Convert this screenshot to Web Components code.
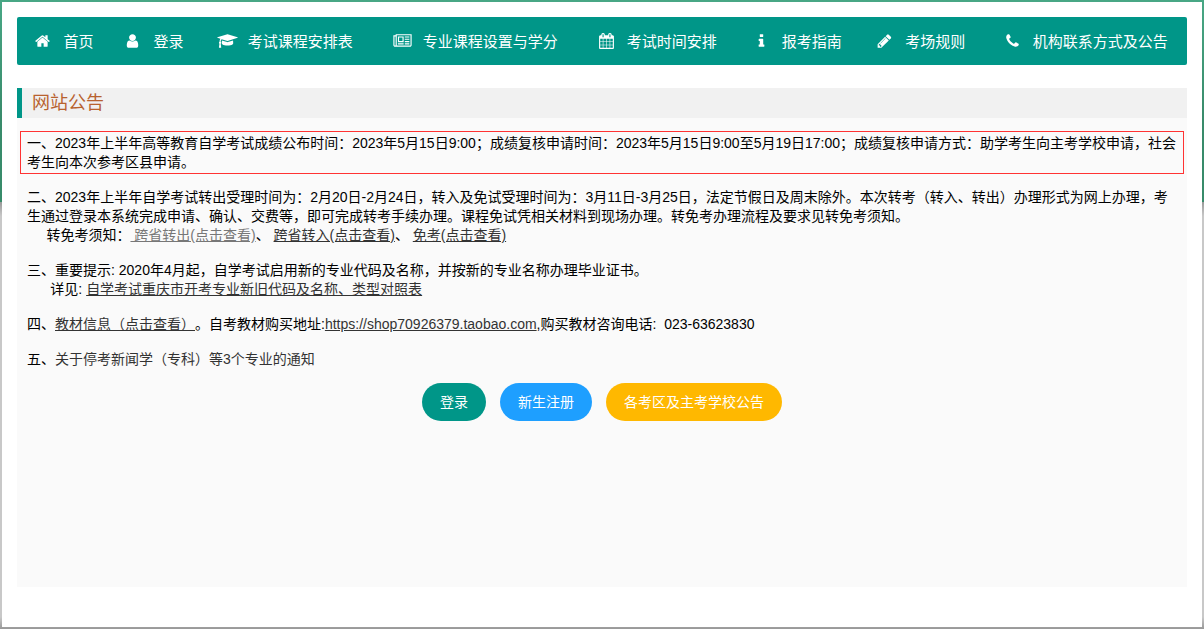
<!DOCTYPE html>
<html lang="zh-CN">
<head>
<meta charset="utf-8">
<title>网站公告</title>
<style>
html { background: #b8b8b8; }
body {
  margin: 0;
  font-family: "Liberation Sans", "Noto Sans CJK SC", sans-serif;
  font-size: 14px;
  line-height: 19px;
  color: #000;
  text-spacing-trim: space-all;
}
</style>
</head>
<body>
<exam-page>
  <nav-bar slot="nav"></nav-bar>
  <section-title slot="title">网站公告</section-title>
  <notice-item boxed>一、2023年上半年高等教育自学考试成绩公布时间：2023年5月15日9:00；成绩复核申请时间：2023年5月15日9:00至5月19日17:00；成绩复核申请方式：助学考生向主考学校申请，社会考生向本次参考区县申请。</notice-item>
  <notice-item>二、2023年上半年自学考试转出受理时间为：2月20日-2月24日，转入及免试受理时间为：3月11日-3月25日，法定节假日及周末除外。本次转考（转入、转出）办理形式为网上办理，考生通过登录本系统完成申请、确认、交费等，即可完成转考手续办理。课程免试凭相关材料到现场办理。转免考办理流程及要求见转免考须知。<br>&nbsp;&nbsp;&nbsp;&nbsp;&nbsp;转免考须知：<text-link muted>&nbsp;跨省转出(点击查看)</text-link>、 <text-link>跨省转入(点击查看)</text-link>、 <text-link>免考(点击查看)</text-link></notice-item>
  <notice-item>三、重要提示: 2020年4月起，自学考试启用新的专业代码及名称，并按新的专业名称办理毕业证书。<br>&nbsp;&nbsp;&nbsp;&nbsp;&nbsp;&nbsp;详见: <text-link>自学考试重庆市开考专业新旧代码及名称、类型对照表</text-link></notice-item>
  <notice-item>四、<text-link>教材信息（点击查看）</text-link>。自考教材购买地址:<text-link>https://shop70926379.taobao.com</text-link>,购买教材咨询电话:&nbsp; 023-63623830</notice-item>
  <notice-item>五、<text-link plain>关于停考新闻学（专科）等3个专业的通知</text-link></notice-item>
  <round-button slot="actions">登录</round-button>
  <round-button slot="actions" tone="blue">新生注册</round-button>
  <round-button slot="actions" tone="amber">各考区及主考学校公告</round-button>
</exam-page>

<script>
function define(name, html, setup) {
  const template = document.createElement('template');
  template.innerHTML = html;
  customElements.define(name, class extends HTMLElement {
    constructor() {
      super();
      this.attachShadow({ mode: 'open' }).append(template.content.cloneNode(true));
      if (setup) setup(this.shadowRoot);
    }
  });
}

define('exam-page', `
<style>
:host {
  display: flex;
  box-sizing: border-box;
  min-height: 100vh;
  padding: 2px;
  background: linear-gradient(#48a785 0, #398b6b 120px, #378b6a 202px, #999 202px, #c8c8c8 216px, #c8c8c8 calc(100% - 12px), #989898 100%);
}
.sheet {
  flex: 1;
  display: flex;
  flex-direction: column;
  min-width: 0;
  background: #fff;
  padding: 15px 15px 40px;
}
main { flex: 1; display: flex; flex-direction: column; margin-top: 23px; background: #fafafa; }
.notices { display: flex; flex-direction: column; gap: 13px; padding: 13px 3px 11px; }
.actions { display: flex; flex-wrap: wrap; justify-content: center; gap: 14px; }
</style>
<div class="sheet">
  <slot name="nav"></slot>
  <main>
    <slot name="title"></slot>
    <div class="notices"><slot></slot></div>
    <div class="actions"><slot name="actions"></slot></div>
  </main>
</div>`);

const navItems = [
  ['首页', 1792, 'M1472 992v480q0 26-19 45t-45 19h-384v-384h-256v384h-384q-26 0-45-19t-19-45v-480q0-1 .5-3t.5-3l575-474 575 474q1 2 1 6zm223-69l-62 74q-8 9-21 11h-3q-13 0-21-7l-692-577-692 577q-12 8-24 7-13-2-21-11l-62-74q-8-10-7-23.5t11-21.5l719-599q32-26 76-26t76 26l244 204v-195q0-14 9-23t23-9h192q14 0 23 9t9 23v408l219 182q10 8 11 21.5t-7 23.5z'],
  ['登录', 1792, 'M1536 1399q0 109-62.5 187t-150.5 78h-854q-88 0-150.5-78t-62.5-187q0-85 8.5-160.5t31.5-152 58.5-131 94-89 134.5-34.5q131 128 313 128t313-128q76 0 134.5 34.5t94 89 58.5 131 31.5 152 8.5 160.5zm-256-887q0 159-112.5 271.5t-271.5 112.5-271.5-112.5-112.5-271.5 112.5-271.5 271.5-112.5 271.5 112.5 112.5 271.5z'],
  ['考试课程安排表', 2304, 'M1774 836l18 316q4 69-82 128t-235 93.5-323 34.5-323-34.5-235-93.5-82-128l18-316 574 181q22 7 48 7t48-7zM2304 512q0 23-22 31l-1120 352q-4 1-10 1t-10-1l-652-206q-43 34-71 111.5t-34 178.5q63 36 63 109 0 69-58 107l58 433q2 14-8 25-9 11-24 11h-192q-15 0-24-11-10-11-8-25l58-433q-58-38-58-107 0-73 65-111 11-207 98-330l-333-104q-22-8-22-31t22-31l1120-352q4-1 10-1t10 1l1120 352q22 8 22 31z'],
  ['专业课程设置与学分', 2048, 'M1024 512h-384v384h384zM1152 1152v128h-640v-128zM1152 384v640h-640v-640zM1792 1152v128h-512v-128zM1792 896v128h-512v-128zM1792 640v128h-512v-128zM1792 384v128h-512v-128zM256 1344v-960h-128v960q0 26 19 45t45 19 45-19 19-45zM1920 1344v-1088h-1536v1088q0 33-11 64h1483q26 0 45-19t19-45zM2048 128v1216q0 80-56 136t-136 56h-1664q-80 0-136-56t-56-136v-1088h256v-128z'],
  ['考试时间安排', 1792, 'M192 1664h288v-288h-288v288zm352 0h320v-288h-320v288zm-352-352h288v-320h-288v320zm352 0h320v-320h-320v320zm-352-384h288v-288h-288v288zm736 736h320v-288h-320v288zm-384-736h320v-288h-320v288zm768 736h288v-288h-288v288zm-384-352h320v-320h-320v320zm-352-864v-288q0-13-9.5-22.5t-22.5-9.5h-64q-13 0-22.5 9.5t-9.5 22.5v288q0 13 9.5 22.5t22.5 9.5h64q13 0 22.5-9.5t9.5-22.5zm736 864h288v-320h-288v320zm-384-384h320v-288h-320v288zm384 0h288v-288h-288v288zm32-480v-288q0-13-9.5-22.5t-22.5-9.5h-64q-13 0-22.5 9.5t-9.5 22.5v288q0 13 9.5 22.5t22.5 9.5h64q13 0 22.5-9.5t9.5-22.5zm384-64v1280q0 52-38 90t-90 38h-1408q-52 0-90-38t-38-90v-1280q0-52 38-90t90-38h128v-96q0-66 47-113t113-47h64q66 0 113 47t47 113v96h384v-96q0-66 47-113t113-47h64q66 0 113 47t47 113v96h128q52 0 90 38t38 90z'],
  ['报考指南', 1792, 'M1216 1344v128q0 26-19 45t-45 19h-512q-26 0-45-19t-19-45v-128q0-26 19-45t45-19h64v-384h-64q-26 0-45-19t-19-45v-128q0-26 19-45t45-19h384q26 0 45 19t19 45v576h64q26 0 45 19t19 45zm-128-1152v192q0 26-19 45t-45 19h-256q-26 0-45-19t-19-45v-192q0-26 19-45t45-19h256q26 0 45 19t19 45z'],
  ['考场规则', 1792, 'M491 1536l91-91-235-235-91 91v107h128v128h107zm523-928q0-22-22-22-10 0-17 7l-542 542q-7 7-7 17 0 22 22 22 10 0 17-7l542-542q7-7 7-17zm-54-192l416 416-832 832h-416v-416zm683 96q0 53-37 90l-166 166-416-416 166-165q36-38 90-38 53 0 91 38l235 234q37 39 37 91z'],
  ['机构联系方式及公告', 1792, 'M1600 1240q0 27-10 70.5t-21 68.5q-21 50-122 106-94 51-186 51-27 0-53-3.5t-57.5-12.5-47-14.5-55.5-20.5-49-18q-98-35-175-83-127-79-264-216t-216-264q-48-77-83-175-3-9-18-49t-20.5-55.5-14.5-47-12.5-57.5-3.5-53q0-92 51-186 56-101 106-122 25-11 68.5-21t70.5-10q14 0 21 3 18 6 53 76 11 19 30 54t35 63.5 31 53.5q3 4 17.5 25t21.5 35.5 7 28.5q0 20-28.5 50t-62 55-62 53-28.5 46q0 9 5 22.5t8.5 20.5 14 24 11.5 19q76 137 174 235t235 174q2 1 19 11.5t24 14 20.5 8.5 22.5 5q18 0 46-28.5t53-62 55-62 50-28.5q14 0 28.5 7t35.5 21.5 25 17.5q25 15 53.5 31t63.5 35 54 30q70 35 76 53 3 7 3 21z']
];

define('nav-bar', `
<style>
:host { display: block; background: #009688; border-radius: 2px; }
ul { display: table; width: 100%; margin: 0; padding: 0; list-style: none; }
li { display: table-cell; padding: 0 9px 0 11px; text-align: center; white-space: nowrap; }
a {
  display: inline-flex;
  align-items: center;
  gap: 10px;
  height: 48px;
  vertical-align: top;
  color: #fff;
  font-size: 15px;
  text-decoration: none;
}
svg { flex: none; width: 21px; height: 16px; fill: currentColor; fill-rule: evenodd; }
</style>
<nav><ul></ul></nav>`, root => {
  root.querySelector('ul').innerHTML = navItems.map(([label, width, path]) =>
    `<li><a href="#"><svg viewBox="0 0 ${width} 1792" aria-hidden="true"><path d="${path}"/></svg><span>${label}</span></a></li>`).join('');
});

define('section-title', `
<style>
:host { display: block; background: #f1f1f1; border-left: 5px solid #009688; }
h1 { margin: 0; padding: 0 10px; font-size: 18px; line-height: 30px; font-weight: 400; color: #b8622f; }
</style>
<h1><slot></slot></h1>`);

define('notice-item', `
<style>
:host { display: block; padding: 0 7px 3px; }
:host([boxed]) { border: 1px solid #f33; padding: 2px 6px 1px; margin-bottom: 1px; }
p { margin: 0; }
</style>
<p><slot></slot></p>`);

// Inline element: no whitespace may stand before the anchor.
define('text-link', `<style>
:host { display: inline; }
a { color: #333; text-decoration: underline; }
:host([muted]) a { color: #777; }
:host([plain]) a { text-decoration: none; }
</style><a href="#"><slot></slot></a>`);

define('round-button', `
<style>
:host { display: block; }
button {
  display: block;
  height: 38px;
  padding: 0 18px;
  border: 0;
  border-radius: 100px;
  background: #009688;
  color: #fff;
  font: inherit;
  white-space: nowrap;
  cursor: pointer;
}
:host([tone="blue"]) button { background: #1e9fff; }
:host([tone="amber"]) button { background: #ffb800; }
</style>
<button type="button"><slot></slot></button>`);
</script>
</body>
</html>
